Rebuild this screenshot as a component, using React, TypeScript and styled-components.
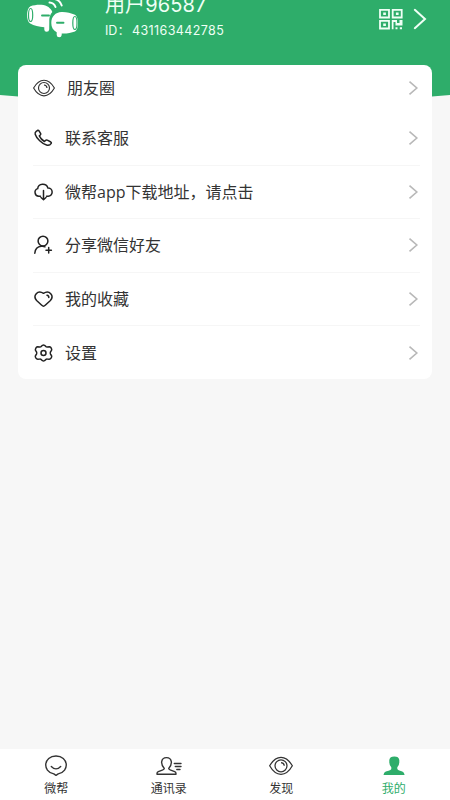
import React from "react";
import styled, { createGlobalStyle } from "styled-components";

const GREEN = "#2ead6a";

const GlobalStyle = createGlobalStyle`
  * { box-sizing: border-box; }
  body { margin: 0; background: #f7f7f7; }
`;

const Screen = styled.div`
  height: 800px;
  width: 450px;
  display: flex;
  flex-direction: column;
  overflow: hidden;
  background: #f7f7f7;
  color: #333;
  font-family: "Open Sans", "Noto Sans CJK SC", sans-serif;
`;

const Header = styled.header`
  height: 104px;
  flex: none;
  display: flex;
  align-items: flex-start;
  padding-left: 26px;
  background: ${GREEN};
  color: #effff5;
  clip-path: path("M0 0H450V95Q225 116 0 95Z");
`;

const Profile = styled.div`
  width: 274px;
  margin-left: 26px;
  white-space: nowrap;
`;

const UserName = styled.div`
  font: 400 20px/24px "Inter", "Noto Sans CJK SC", sans-serif;
  margin-top: -7px;
  letter-spacing: 0.1px;
`;

const UserId = styled.div`
  display: flex;
  margin-top: 6px;
  font: 400 12.5px/16px "Inter", "Noto Sans CJK SC", sans-serif;
`;

const IdLabel = styled.span`
  width: 27px;
`;

const IdNumber = styled.span`
  letter-spacing: 0.4px;
`;

const HeaderActions = styled.div`
  display: flex;
  align-items: center;
  gap: 10px;
  padding-top: 8px;
`;

const Card = styled.main`
  width: 414px;
  flex: none;
  margin: -39px auto 0 18px;
  padding: 0 12px 0 15px;
  border-radius: 8px;
  background: #fff;
  position: relative;
`;

const Row = styled.div<{ $first?: boolean; $line?: boolean }>`
  display: flex;
  align-items: center;
  height: ${(p) => (p.$first ? 47 : p.$line ? 53.6 : 52.6)}px;
  padding-bottom: ${(p) => (p.$first ? 1 : 0)}px;
  border-bottom: ${(p) => (p.$line ? "1px solid #f6f6f6" : "0")};
`;

const RowIcon = styled.span<{ $wide?: boolean }>`
  display: flex;
  width: ${(p) => (p.$wide ? 34 : 32)}px;
`;

const RowLabel = styled.span`
  flex: 1;
  font-size: 16px;
  line-height: 24px;
`;

const RowArrow = styled.span`
  display: flex;
  margin-right: 1px;
`;

const TabBar = styled.nav`
  display: grid;
  grid-template-columns: repeat(4, 1fr);
  height: 51px;
  flex: none;
  margin-top: auto;
  background: #fff;
`;

const Tab = styled.div<{ $active?: boolean }>`
  display: flex;
  flex-direction: column;
  align-items: center;
  padding-top: 5px;
  color: ${(p) => (p.$active ? GREEN : "#333")};
`;

const TabLabel = styled.span`
  font-size: 12px;
  line-height: 18px;
  margin-top: 2px;
`;

const Logo = () => (
  <svg width="53" height="40" viewBox="26 0 53 40" fill="none">
    <path
      fill="#fff"
      d="M30.500 6.200C34 5 38 4.500 41.500 4.800C47 5.300 51 8.200 52.300 12C50 14.500 49 18 49.300 21.500L49.200 29.500Q49 31.800 46.700 31.800Q44.300 31.800 44.300 29.500V27.200C39 27.200 34 25.700 30.200 23.600C26 21.500 26 8 30.500 6.200Z"
    />
    <path
      fill="#fff"
      stroke={GREEN}
      strokeWidth="2"
      paintOrder="stroke"
      d="M61.500 12C66 11.800 71 13 75 14.700C79 17 79 29.500 75 31.500C71 33 66 33.800 61.700 33.500V35Q61.500 37.300 59.200 37.300Q56.800 37.300 56.700 35V32.200C53 30.500 51.300 27 51.300 23C51.300 16.500 55.500 12.200 61.500 12Z"
    />
    <ellipse cx="30.600" cy="15" rx="2.100" ry="6.500" stroke={GREEN} strokeWidth="1.200" />
    <ellipse cx="74.900" cy="23" rx="2.100" ry="6.500" stroke={GREEN} strokeWidth="1.200" />
    <path d="M42 15.500H49M57 22.800H63.500" stroke={GREEN} strokeWidth="1.900" strokeLinecap="round" />
    <path d="M49.500 2.500Q54 2.800 55.500 7M54 -1.200Q60 0 61.700 5.500" stroke="#fff" strokeWidth="2" strokeLinecap="round" />
  </svg>
);

const QrIcon = () => (
  <svg width="24" height="22" viewBox="0 0 24 22" fill="none">
    <g stroke="#effff5" strokeWidth="1.800">
      <path d="M1 1.800H10V9.500H1ZM13.700 1.800H22.700V9.500H13.700ZM1 12.800H10V20.500H1Z" />
    </g>
    <path
      fill="#effff5"
      d="M4.200 4.500H6.900V6.900H4.200ZM16.900 4.500H19.600V6.900H16.900ZM4.200 15.500H6.900V17.900H4.200ZM12.800 12H18V15H20.500V12H23.500V17.500H16.500V14H14.500V21.300H12.800ZM16.500 19.300H18.500V21.300H16.500ZM20.800 19.300H23V21.300H20.800Z"
    />
  </svg>
);

const HeaderArrow = () => (
  <svg width="15" height="22" viewBox="0 0 15 22" fill="none">
    <path d="M1.800 1.800L12 11L1.800 20.200" stroke="#effff5" strokeWidth="2" strokeLinecap="round" />
  </svg>
);

const Arrow = () => (
  <svg width="11" height="16" viewBox="0 0 11 16" fill="none">
    <path d="M1.500 1.700L8.800 8L1.500 14.300" stroke="#b8b8b8" strokeWidth="1.600" />
  </svg>
);

const EyeIcon = ({ width = 22 }: { width?: number }) => (
  <svg width={width} height={(width * 18) / 22} viewBox="0 0 22 18" fill="none" stroke="#333" strokeWidth="1.150">
    <path d="M.6 9Q5 1.200 11 1.200T21.400 9Q17 16.800 11 16.800T.6 9Z" />
    <circle cx="11" cy="9" r="5.500" />
    <path d="M11 6Q13.800 6.200 14 9" />
  </svg>
);

const LineSvg = styled.svg.attrs({ width: 21, height: 20, viewBox: "0 0 21 20" })`
  fill: none;
  stroke: #222;
  stroke-width: 1.5;
  stroke-linecap: round;
  stroke-linejoin: round;
`;

const PhoneIcon = () => (
  <LineSvg>
    <path d="M3.200 3.300L4.700 2.300Q5.400 2 6 2.800L7.700 5.600Q8 6.500 7.300 7L6.300 7.900Q7.800 11.300 11.400 13.500L13 12.200Q13.700 11.800 14.400 12.200L17.800 14Q18.700 14.600 18.100 15.500L17.100 16.600Q15.700 17.600 13.500 17Q10.300 16.100 6.700 12.700Q3 9.100 2.200 6.200Q1.700 4.400 3.200 3.300Z" />
  </LineSvg>
);

const CloudIcon = () => (
  <LineSvg>
    <path d="M7.500 14.200H5.800A3.900 3.900 0 0 1 4.700 6.600C5.300 1.300 13.200.700 14.900 6A4.100 4.100 0 0 1 15.200 14.200H13.500M10.500 8.500V17.500M8 15.500L10.500 17.700L13 15.500" />
  </LineSvg>
);

const UserPlusIcon = () => (
  <LineSvg>
    <circle cx="10" cy="6.100" r="4.900" />
    <path d="M1.800 18.200Q2.300 11.800 8.300 11.300Q10.500 11 12 11.800M15.700 12.600V18M13 15.300H18.400" />
  </LineSvg>
);

const HeartIcon = () => (
  <LineSvg>
    <path d="M10.500 17.200Q9.800 17.200 8.500 16L3.600 11.500C-.5 7 4.500.3 10.500 4.300C16.500.3 21.500 7 17.400 11.500L12.500 16Q11.200 17.200 10.500 17.200Z" />
    <path d="M14 6.300Q15.900 6.500 15.800 8.500" />
  </LineSvg>
);

const GearIcon = () => (
  <LineSvg>
    <path d="M8 3.600L9.500 2.300Q10.500 1.700 11.500 2.300L13 3.600Q13.500 4 14.200 3.900L16.500 3.800Q17.700 4 18.200 5.100L18.700 6.500Q18.800 7 18.200 7.800L17.500 8.900Q17 10 17.500 11.100L18.400 12.500Q18.900 13.200 18.600 13.900L18 15.100Q17.400 16.100 16.200 16.200L14.200 16.100Q13.500 16 13 16.400L11.500 17.700Q10.500 18.300 9.500 17.700L8 16.400Q7.500 16 6.800 16.100L4.800 16.200Q3.600 16.100 3 15.100L2.400 13.900Q2.100 13.200 2.600 12.500L3.500 11.100Q4 10 3.500 8.900L2.800 7.800Q2.200 7 2.400 6.400L2.900 5.100Q3.400 4 4.500 3.800L6.800 3.900Q7.500 4 8 3.600Z" />
    <circle cx="10.500" cy="10" r="2.500" />
  </LineSvg>
);

const TabSvg = styled.svg.attrs({ width: 28, height: 24, viewBox: "0 0 28 24" })`
  fill: none;
  stroke: #333;
  stroke-width: 1.4;
  stroke-linecap: round;
  stroke-linejoin: round;
`;

const ChatIcon = () => (
  <TabSvg>
    <path d="M14 21.300L11.800 19.900C0 17.500 1.500 2 14 2C26.500 2 28 17.500 16.200 19.900Z" />
    <path d="M9.300 12.500Q14 17.300 18.700 12.500" />
  </TabSvg>
);

const ContactsIcon = () => (
  <TabSvg>
    <path d="M9.300 14.500Q6.200 11 6.700 7.600Q7.300 3.600 11.500 3.600T16.300 7.600Q16.800 11 13.700 14.500Q13.800 15.600 15.700 16.200L19.700 17.700Q21.200 18.400 21 20.200H2Q1.800 18.400 3.300 17.700L7.300 16.200Q9.200 15.600 9.300 14.500Z" />
    <path d="M19.300 9.500H26M20.300 12.500H26M21.800 15.500H25" />
  </TabSvg>
);

const MineIcon = () => (
  <svg width="28" height="24" viewBox="0 0 28 24">
    <path
      fill={GREEN}
      d="M9.300 6Q9.800 2.600 14.300 2.600T19.300 6V8.500Q19.100 12 17.300 13.300V15Q17.700 16.200 20 16.800L22.300 17.400Q24.300 18.200 24.600 21H3.500Q3.800 18.200 5.800 17.400L8.600 16.800Q10.900 16.200 11.300 15V13.300Q9.500 12 9.300 8.500Z"
    />
  </svg>
);

const EyeBox = styled.span`
  display: flex;
  align-items: center;
  height: 24px;
`;

const items = [
  { label: "朋友圈", icon: <EyeIcon /> },
  { label: "联系客服", icon: <PhoneIcon /> },
  { label: "微帮app下载地址，请点击", icon: <CloudIcon /> },
  { label: "分享微信好友", icon: <UserPlusIcon /> },
  { label: "我的收藏", icon: <HeartIcon /> },
  { label: "设置", icon: <GearIcon /> },
];

const tabs = [
  { label: "微帮", icon: <ChatIcon /> },
  { label: "通讯录", icon: <ContactsIcon /> },
  { label: "发现", icon: <EyeBox><EyeIcon width={24} /></EyeBox> },
  { label: "我的", icon: <MineIcon />, active: true },
];

export default function App() {
  return (
    <Screen>
      <GlobalStyle />
      <Header>
        <Logo />
        <Profile>
          <UserName>用户96587</UserName>
          <UserId>
            <IdLabel>ID：</IdLabel>
            <IdNumber>431163442785</IdNumber>
          </UserId>
        </Profile>
        <HeaderActions>
          <QrIcon />
          <HeaderArrow />
        </HeaderActions>
      </Header>
      <Card>
        {items.map((item, i) => (
          <Row key={item.label} $first={i === 0} $line={i > 0 && i < items.length - 1}>
            <RowIcon $wide={i === 0}>{item.icon}</RowIcon>
            <RowLabel>{item.label}</RowLabel>
            <RowArrow>
              <Arrow />
            </RowArrow>
          </Row>
        ))}
      </Card>
      <TabBar>
        {tabs.map((tab) => (
          <Tab key={tab.label} $active={tab.active}>
            {tab.icon}
            <TabLabel>{tab.label}</TabLabel>
          </Tab>
        ))}
      </TabBar>
    </Screen>
  );
}
